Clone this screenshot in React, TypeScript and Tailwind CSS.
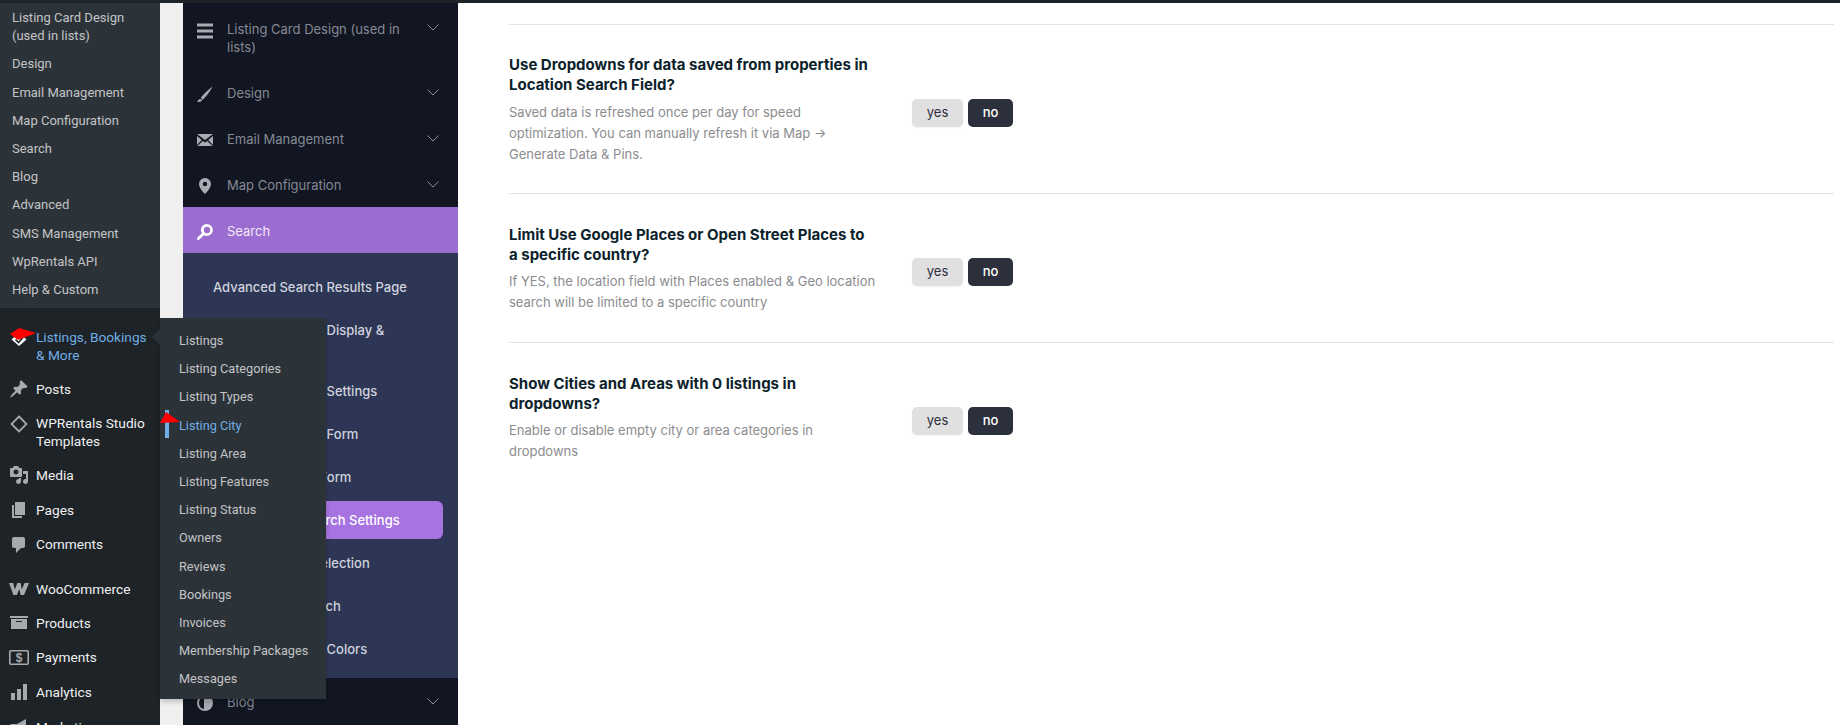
import type { ReactNode } from "react";

const wpFont = "font-['Roboto','Liberation_Sans',sans-serif]";

function Dash({ d, className = "" }: { d: string; className?: string }) {
  return (
    <svg viewBox="0 0 20 20" className={`h-5 w-5 fill-[#a7aaad] ${className}`}>
      <path d={d} />
    </svg>
  );
}

const submenu = [
  "Listing Card Design (used in lists)",
  "Design",
  "Email Management",
  "Map Configuration",
  "Search",
  "Blog",
  "Advanced",
  "SMS Management",
  "WpRentals API",
  "Help & Custom",
];

const flyout = [
  "Listings",
  "Listing Categories",
  "Listing Types",
  "Listing City",
  "Listing Area",
  "Listing Features",
  "Listing Status",
  "Owners",
  "Reviews",
  "Bookings",
  "Invoices",
  "Membership Packages",
  "Messages",
];

function MenuRow({
  icon,
  label,
  className = "",
}: {
  icon: ReactNode;
  label: ReactNode;
  className?: string;
}) {
  return (
    <div className={`flex items-start text-[13.7px] text-[#f0f0f1] ${className}`}>
      <span className="flex h-[18px] w-[36px] shrink-0 items-center justify-center pl-[2px]">{icon}</span>
      <span className="leading-[18px]">{label}</span>
    </div>
  );
}

function AdminMenu() {
  return (
    <aside className={`relative w-[160px] shrink-0 bg-[#1d2327] text-[13px] ${wpFont}`}>
      <div className="h-[305px] bg-[#2c3338] pt-[1px] text-[#c3c4c7]">
        {submenu.map((label) => (
          <div key={label} className="px-[12px] py-[5px] leading-[18.2px]">
            {label}
          </div>
        ))}
      </div>

      <MenuRow
        className="pt-[20px]"
        icon={
          <svg viewBox="0 0 20 20" className="mt-[4px] h-5 w-5 shrink-0">
            <path d="M10 3.500 17.500 10.500 10 17 2.500 10.500z" fill="#fff" />
            <path d="m6.500 10.500 3 3 4.500-5" fill="none" stroke="#1d2327" strokeWidth="1.600" />
          </svg>
        }
        label={
          <span className="block w-[118px] text-[#72aee6]">Listings, Bookings &amp; More</span>
        }
      />
      <MenuRow
        className="pt-[16px]"
        icon={
          <Dash
            className="shrink-0"
            d="M10.44 3.02l1.82-1.82 6.36 6.35-1.83 1.82c-1.05-.68-2.48-.57-3.41.36l-.75.75c-.92.93-1.04 2.35-.35 3.41l-1.83 1.82-2.41-2.41-2.8 2.79c-.42.42-3.38 2.71-3.8 2.29s1.86-3.39 2.28-3.81l2.79-2.79L4.1 9.36l1.83-1.82c1.05.69 2.48.57 3.4-.36l.75-.75c.93-.92 1.05-2.35.36-3.41z"
          />
        }
        label="Posts"
      />
      <MenuRow
        className="pt-[16px]"
        icon={
          <svg viewBox="0 0 20 20" className="mt-[2px] h-5 w-5 shrink-0">
            <path d="M10 2.500 17.500 10 10 17.500 2.500 10z" fill="none" stroke="#a7aaad" strokeWidth="1.800" />
          </svg>
        }
        label={<span className="block w-[120px]">WPRentals Studio Templates</span>}
      />
      <MenuRow
        className="pt-[16px]"
        icon={
          <Dash
            className="shrink-0"
            d="M13 11V4c0-.55-.45-1-1-1h-1.670L9 1H5L3.670 3H2c-.55 0-1 .45-1 1v7c0 .55.45 1 1 1h10c.55 0 1-.45 1-1zM7 4.500c1.380 0 2.500 1.120 2.500 2.500S8.380 9.500 7 9.500 4.500 8.380 4.500 7 5.620 4.500 7 4.500zM14 6h5v10.500c0 1.380-1.120 2.500-2.500 2.500S14 17.880 14 16.500s1.120-2.500 2.500-2.500c.17 0 .34.02.5.05V9h-3V6zm-4 8.050V13h2v3.500c0 1.380-1.120 2.500-2.500 2.500S7 17.880 7 16.500 8.120 14 9.500 14c.17 0 .34.02.5.05z"
          />
        }
        label="Media"
      />
      <MenuRow
        className="pt-[17px]"
        icon={<Dash className="shrink-0" d="M6 15V2h10v13H6zm-1 1h8v2H3V5h2v11z" />}
        label="Pages"
      />
      <MenuRow
        className="pt-[16px]"
        icon={
          <Dash
            className="mt-[1px] shrink-0"
            d="M5 2h9c1.100 0 2 .9 2 2v7c0 1.100-.9 2-2 2h-2l-5 5v-5H5c-1.100 0-2-.9-2-2V4c0-1.100.9-2 2-2z"
          />
        }
        label="Comments"
      />
      <MenuRow
        className="pt-[27px]"
        icon={
          <svg viewBox="0 0 20 12" className="h-[12px] w-[20px] shrink-0 fill-[#a7aaad]">
            <path d="M0 0h4.200l1.600 6.600L8.400 0h3.300l1 6.600L15.600 0H20l-5 12h-3.400l-1.200-6-2.600 6H4.400z" />
          </svg>
        }
        label="WooCommerce"
      />
      <MenuRow
        className="pt-[16px]"
        icon={<Dash className="shrink-0" d="M19 3v2H1V3h18zM2 6h16v10H2V6zm11 3V8H7v1h6z" />}
        label="Products"
      />
      <MenuRow
        className="pt-[16px]"
        icon={
          <svg viewBox="0 0 20 20" className="h-5 w-5 shrink-0">
            <rect x="0.800" y="3.800" width="18.400" height="13.400" rx="1" fill="none" stroke="#a7aaad" strokeWidth="1.600" />
            <text x="10" y="15" textAnchor="middle" fontSize="12" fontWeight="700" fill="#a7aaad" fontFamily="Liberation Sans">
              $
            </text>
          </svg>
        }
        label="Payments"
      />
      <MenuRow
        className="pt-[17px]"
        icon={<Dash className="shrink-0" d="M2 11h4v7H2zM8 7h4v11H8zM14 2h4v16h-4z" />}
        label="Analytics"
      />
      <MenuRow
        className="pt-[17px]"
        icon={
          <Dash
            className="shrink-0"
            d="M18 7h-1V2l-9 5H3a2 2 0 0 0-2 2v2a2 2 0 0 0 2 2h1l1 5h3l-1-5h1l9 5V7z"
          />
        }
        label="Marketing"
      />

      {/* flyout of Listings, Bookings & More */}
      <div className="absolute left-[160px] top-[315px] z-20 w-[166px] bg-[#2c3338] pb-[5px] pt-[9px] text-[12.7px] shadow-[0_3px_5px_rgba(0,0,0,0.2)]">
        <span className="absolute left-[-8px] top-[11px] h-0 w-0 border-y-[8px] border-r-[8px] border-y-transparent border-r-[#2c3338]" />
        {flyout.map((label) => (
          <div
            key={label}
            className={`whitespace-nowrap px-[19px] py-[5px] leading-[18.2px] ${
              label === "Listing City" ? "text-[#72aee6]" : "text-[#c3c4c7]"
            }`}
          >
            {label}
          </div>
        ))}
        <span className="absolute left-[5px] top-[92px] h-[28px] w-[4px] bg-[#72aee6]" />
        <svg viewBox="0 0 20 12" className="absolute left-0 top-[94px] h-[12px] w-[20px]">
          <path d="M6 0 20 10 0 11z" fill="#f00" />
        </svg>
      </div>

      {/* red annotation arrow on the menu icon */}
      <svg viewBox="0 0 26 12" className="absolute left-[10px] top-[325px] z-10 h-[12px] w-[26px]">
        <path d="M0 6 9 0l17 5-18 7z" fill="#f00" />
      </svg>
    </aside>
  );
}

const chevron = (
  <svg viewBox="0 0 12 7" className="h-[7px] w-[12px] fill-none stroke-[#8c8f99]">
    <path d="m.5.5 5.500 5.500 5.500-5.500" strokeWidth="1" />
  </svg>
);

const sideIcon = "h-4 w-4 fill-[#a9abb3]";

function SideRow({
  icon,
  label,
  active,
  tall,
}: {
  icon: ReactNode;
  label: string;
  active?: boolean;
  tall?: boolean;
}) {
  return (
    <div
      className={`flex pl-[14px] pr-[19px] ${tall ? "h-[66px] pt-[17px]" : "h-[46px] items-center pt-[1px]"} ${
        active ? "bg-[#9b6dd0] text-[#f1e9fa]" : "text-[#868994]"
      }`}
    >
      <span className="flex w-[30px] shrink-0 justify-start pt-[3px]">{icon}</span>
      <span className="flex-1 leading-[18px]">{label}</span>
      {!active && <span className={tall ? "pt-[4px]" : ""}>{chevron}</span>}
    </div>
  );
}

const searchItems = [
  "Advanced Search Results Page",
  "Advanced Search Display & Layout",
  "Advanced Search Settings",
  "Advanced Search Form",
  "Half Map Search Form",
  "Geo Positions Search Settings",
  "Search Options Selection",
  "Geo-location Search",
  "Advanced Search Colors",
];

function OptionsSidebar() {
  return (
    <nav className="ml-[23px] w-[275px] shrink-0 bg-[#111622] font-['Inter',sans-serif] text-[13px]">
      <SideRow
        tall
        label="Listing Card Design (used in lists)"
        icon={
          <svg viewBox="2 2 16 16" className={sideIcon}>
            <path d="M2 2.500h16v3H2zM2 8.500h16v3H2zM2 14.500h16v3H2z" />
          </svg>
        }
      />
      <SideRow
        label="Design"
        icon={
          <svg viewBox="2 2 16 16" className={sideIcon}>
            <path d="M17.500 2.500C13 6 8 10.500 5.500 14c1.200.2 1.700.8 2 2 3.500-3 7.500-8.500 10-13.500zM5 15c-1.800.3-2.200 2-3 3 2 0 4.500-.3 5-1.500.2-.7-1-1.700-2-1.500z" />
          </svg>
        }
      />
      <SideRow
        label="Email Management"
        icon={
          <svg viewBox="2 2 16 16" className={sideIcon}>
            <path d="M2 4h16l-8 6zM2 6l4.800 4L2 15zM18 6v9l-4.800-5zM7.800 11 10 12.600l2.200-1.600 5.300 5H2.500z" />
          </svg>
        }
      />
      <SideRow
        label="Map Configuration"
        icon={
          <svg viewBox="2 2 16 16" className={sideIcon}>
            <path d="M10 2a6 6 0 0 0-6 6c0 3.500 3.600 7.600 6 10 2.400-2.400 6-6.500 6-10a6 6 0 0 0-6-6zm0 8.200a2.200 2.200 0 1 1 0-4.400 2.200 2.200 0 0 1 0 4.400z" />
          </svg>
        }
      />
      <SideRow
        active
        label="Search"
        icon={
          <svg viewBox="2 2 16 16" className="h-4 w-4 fill-white">
            <path d="M12 2a6 6 0 0 0-5.100 9.200L2.400 15.600a1.400 1.400 0 0 0 2 2l4.400-4.400A6 6 0 1 0 12 2zm0 2.800a3.200 3.200 0 1 1 0 6.400 3.200 3.200 0 0 1 0-6.400z" />
          </svg>
        }
      />
      <div className="flex flex-col gap-[5px] bg-[#2d3654] pb-[10px] pl-[14px] pr-[15px] pt-[15px] font-medium text-[#d0d3df]">
        {searchItems.map((label, i) => (
          <div
            key={label}
            className={`rounded-[6px] px-[16px] py-[10px] leading-[18px] ${
              i === 5 ? "bg-[#a673e0] text-white" : ""
            }`}
          >
            {label}
          </div>
        ))}
      </div>
      <SideRow
        label="Blog"
        icon={
          <svg viewBox="2 2 16 16" className={sideIcon}>
            <path d="M10 2a8 8 0 1 0 0 16 8 8 0 0 0 0-16zM4 10a6 6 0 0 1 5-5.900v11.800A6 6 0 0 1 4 10z" />
          </svg>
        }
      />
    </nav>
  );
}

function YesNo() {
  return (
    <div className="ml-[36px] mt-[6px] flex shrink-0 gap-[5px] text-[13px]">
      <button
        type="button"
        className="h-[28px] w-[51px] rounded-[5px] bg-[#e0e0e0] text-[#2c2f3c] shadow-[0_1px_2px_rgba(0,0,0,0.05)]"
      >
        yes
      </button>
      <button
        type="button"
        className="h-[28px] w-[45px] rounded-[5px] bg-[#2c2f3c] font-medium text-white"
      >
        no
      </button>
    </div>
  );
}

function OptionRow({
  title,
  desc,
  className,
  descClass,
}: {
  title: string;
  desc: string;
  className: string;
  descClass: string;
}) {
  return (
    <div className={`flex items-center border-t border-[#e4e4e8] ${className}`}>
      <div className="w-[367px] shrink-0">
        <h3 className="text-[15px] font-bold leading-[19.5px] text-[#0c222b]">{title}</h3>
        <p className={`text-[13px] leading-[21px] text-[#8c8c8f] ${descClass}`}>{desc}</p>
      </div>
      <YesNo />
    </div>
  );
}

export default function App() {
  return (
    <div className="flex h-[725px] flex-col overflow-hidden bg-[#f0f0f1]">
      <div className="h-[3px] shrink-0 bg-[#1d2327]" />
      <div className="flex min-h-0 flex-1">
        <AdminMenu />
        <OptionsSidebar />
        <main className="flex-1 bg-white pl-[51px] pr-[6px] pt-[21px] font-['Inter',sans-serif]">
          <OptionRow
            className="pb-[28px] pt-[30px]"
            descClass="mt-[8px]"
            title="Use Dropdowns for data saved from properties in Location Search Field?"
            desc="Saved data is refreshed once per day for speed optimization. You can manually refresh it via Map → Generate Data & Pins."
          />
          <OptionRow
            className="pb-[29px] pt-[31px]"
            descClass="mt-[7px]"
            title="Limit Use Google Places or Open Street Places to a specific country?"
            desc="If YES, the location field with Places enabled & Geo location search will be limited to a specific country"
          />
          <OptionRow
            className="pb-[29px] pt-[31px]"
            descClass="mt-[7px]"
            title="Show Cities and Areas with 0 listings in dropdowns?"
            desc="Enable or disable empty city or area categories in dropdowns"
          />
        </main>
      </div>
    </div>
  );
}
